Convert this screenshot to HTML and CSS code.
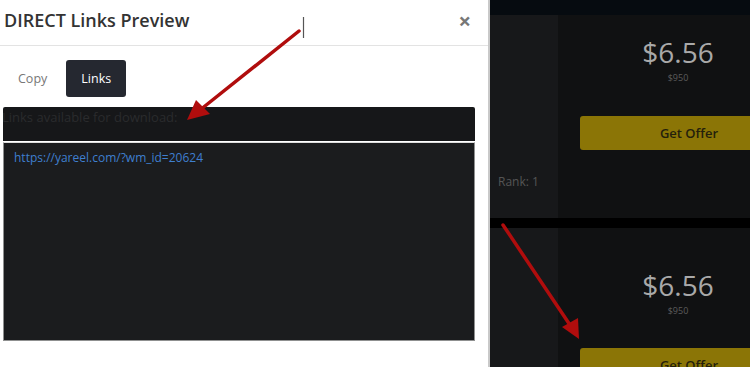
FILE: index.html
```html
<!DOCTYPE html>
<html lang="en">
<head>
  <meta charset="UTF-8">
  <title>DIRECT Links Preview</title>
  <link rel="stylesheet" href="styles.css">
</head>
<body>
  <div class="page">
    <div class="modal">
      <div class="modal-header">
        <h1>DIRECT Links Preview</h1>
        <span class="close">&times;</span>
      </div>
      <div class="tabs">
        <span class="tab">Copy</span>
        <span class="tab active">Links</span>
      </div>
      <div class="links-label">Links available for download:</div>
      <div class="links-box">
        <a href="#">https://yareel.com/?wm_id=20624</a>
      </div>
    </div>

    <div class="backdrop">
      <div class="topbar"></div>
      <div class="offer">
        <div class="offer-side"><span class="rank">Rank: 1</span></div>
        <div class="offer-main">
          <div class="price">$6.56</div>
          <div class="old-price">$950</div>
          <div class="btn">Get Offer</div>
        </div>
      </div>
      <div class="offer second">
        <div class="offer-side"></div>
        <div class="offer-main">
          <div class="price">$6.56</div>
          <div class="old-price">$950</div>
          <div class="btn">Get Offer</div>
        </div>
      </div>
    </div>
  </div>

  <!-- annotation overlay -->
  <svg class="marks" width="750" height="367" viewBox="0 0 750 367">
    <line x1="303.5" y1="17" x2="303.5" y2="38" stroke="#555" stroke-width="1.2"/>
    <line x1="299" y1="31" x2="200" y2="110" stroke="#b00d0d" stroke-width="3.5" stroke-linecap="round"/>
    <polygon points="187,120 196,100 210,114" fill="#b00d0d"/>
    <line x1="503" y1="225" x2="570" y2="325" stroke="#b00d0d" stroke-width="3.5" stroke-linecap="round"/>
    <polygon points="579,339 562,327 578,318" fill="#b00d0d"/>
  </svg>
</body>
</html>
```

FILE: styles.css
```css
body { margin: 0; font-family: "Open Sans", sans-serif; overflow: hidden; }
.page { display: flex; width: 750px; height: 367px; overflow: hidden; }

.modal { width: 488px; flex: none; background: #fff; border-right: 2px solid #c9c9c9; }
.modal-header { height: 46px; display: flex; align-items: center; justify-content: space-between; padding: 0 17px 6px 4px; border-bottom: 1px solid #e3e3e3; box-sizing: border-box; }
.modal-header h1 { margin: 0; font-size: 18px; font-weight: 600; color: #333; }
.close { font-size: 22px; font-weight: 700; color: #777; line-height: 1; }

.tabs { display: flex; gap: 4px; padding: 14px 3px 0; }
.tab { font-size: 12.5px; color: #777; height: 37px; line-height: 37px; padding: 0 15px; border-radius: 3px; }
.tab.active { background: #252830; color: #fff; padding: 0 15px; }

.links-label { margin: 10px 13px 0 3px; height: 34px; overflow: hidden; background: #161719; color: #2a2b2d; font-size: 13px; text-indent: -1px; line-height: 20px; border-radius: 2px 2px 0 0; }
.links-box { margin: 1px 13px 0 3px; height: 199px; box-sizing: border-box; background: #1b1c1e; border: 1px solid #8f9090; border-top-color: #ddd; padding: 2px 10px; }
.links-box a { color: #3f7fcf; font-size: 12px; text-decoration: none; }

.backdrop { flex: 1; background: #000; overflow: hidden; }
.topbar { height: 15px; background: #060b10; }
.offer { display: flex; height: 203px; }
.offer.second { margin-top: 10px; }
.offer-side { width: 68px; flex: none; background: #17181a; display: flex; align-items: flex-end; }
.rank { color: #555; font-size: 12px; padding: 0 0 28px 8px; }
.offer-main { width: 240px; flex: none; background: #101112; display: flex; flex-direction: column; align-items: center; padding-top: 17px; box-sizing: border-box; }
.second .offer-main { padding-top: 37px; }
.price { font-size: 28px; color: #a9a9a9; line-height: 40px; }
.old-price { font-size: 9px; color: #5c5c5c; margin-top: -1px; }
.btn { margin: 32px 0 0 22px; align-self: stretch; height: 34px; line-height: 34px; text-align: center; background: #8b7506; color: #241f0c; font-size: 13px; font-weight: 600; border-radius: 3px; }
.second .btn { margin-top: 31px; }

.marks { position: absolute; left: 0; top: 0; }
```
